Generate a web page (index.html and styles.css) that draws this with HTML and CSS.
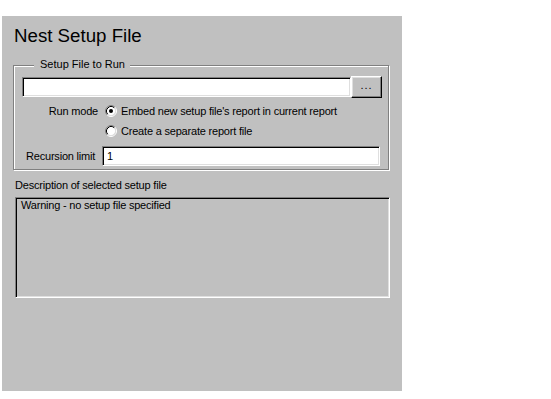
FILE: index.html
```html
<!DOCTYPE html>
<html>
<head>
<meta charset="utf-8">
<link rel="stylesheet" href="styles.css">
</head>
<body>
<div class="panel">
  <h1 class="title">Nest Setup File</h1>
  <div class="group">
    <span class="legend">Setup File to Run</span>
    <div class="row file-row">
      <div class="field file-field"></div>
      <div class="btn">...</div>
    </div>
    <div class="row radio-row">
      <span class="row-label">Run mode</span>
      <span class="radio">
        <svg width="12" height="12" viewBox="0 0 12 12"><circle cx="6" cy="6" r="4.5" fill="#fff"/><path d="M2.11 9.89A5.5 5.5 0 0 1 9.89 2.11" stroke="#808080" fill="none"/><path d="M9.89 2.11A5.5 5.5 0 0 1 2.11 9.89" stroke="#fff" fill="none"/><path d="M2.82 9.18A4.5 4.5 0 0 1 9.18 2.82" stroke="#000" fill="none"/><path d="M9.18 2.82A4.5 4.5 0 0 1 2.82 9.18" stroke="#dfdfdf" fill="none"/><circle cx="6" cy="6" r="2" fill="#000"/></svg>
      </span>
      <span class="radio-text">Embed new setup file's report in current report</span>
    </div>
    <div class="row radio-row">
      <span class="row-label"></span>
      <span class="radio">
        <svg width="12" height="12" viewBox="0 0 12 12"><circle cx="6" cy="6" r="4.5" fill="#fff"/><path d="M2.11 9.89A5.5 5.5 0 0 1 9.89 2.11" stroke="#808080" fill="none"/><path d="M9.89 2.11A5.5 5.5 0 0 1 2.11 9.89" stroke="#fff" fill="none"/><path d="M2.82 9.18A4.5 4.5 0 0 1 9.18 2.82" stroke="#000" fill="none"/><path d="M9.18 2.82A4.5 4.5 0 0 1 2.82 9.18" stroke="#dfdfdf" fill="none"/></svg>
      </span>
      <span class="radio-text">Create a separate report file</span>
    </div>
    <div class="row rec-row">
      <span class="rec-label">Recursion limit</span>
      <div class="field rec-field">1</div>
    </div>
  </div>
  <div class="desc-label">Description of selected setup file</div>
  <div class="desc-box">Warning - no setup file specified</div>
</div>
</body>
</html>
```

FILE: styles.css
```css
html, body {
  margin: 0;
  padding: 0;
  background: #fff;
}
body {
  font-family: "Liberation Sans", Arial, sans-serif;
  font-size: 11px;
  line-height: 13px;
  letter-spacing: -0.2px;
  color: #000;
}
.panel {
  margin: 16px 0 0 2px;
  width: 400px;
  height: 375px;
  box-sizing: border-box;
  background: #c0c0c0;
  padding: 9px 0 0 11px;
}
.title {
  margin: 0;
  padding-left: 1px;
  font-size: 18.7px;
  line-height: 21px;
  font-weight: normal;
  letter-spacing: 0;
  height: 21px;
}
.group {
  position: relative;
  margin-top: 19px;
  width: 376px;
  height: 105px;
  box-sizing: border-box;
  border: 1px solid #808080;
  box-shadow: inset 1px 1px #fff, 1px 1px #fff;
  padding: 10px 6px 0 8px;
}
.legend {
  position: absolute;
  top: -8px;
  left: 20px;
  padding: 0 5px 0 6px;
  background: #c0c0c0;
  letter-spacing: 0;
}
.row {
  display: flex;
  align-items: center;
}
.file-row {
  height: 22px;
}
.field {
  box-sizing: border-box;
  height: 20px;
  background: #fff;
  border: 1px solid;
  border-color: #808080 #fff #fff #808080;
  box-shadow: inset 1px 1px #000, inset -1px -1px #dfdfdf;
  padding: 3px 0 0 4px;
}
.file-field {
  width: 330px;
}
.btn {
  box-sizing: border-box;
  width: 31px;
  height: 22px;
  border: 1px solid;
  border-color: #fff #000 #000 #fff;
  box-shadow: inset -1px -1px #808080, inset 1px 1px #dfdfdf;
  text-align: center;
  line-height: 16px;
  letter-spacing: 1px;
}
.radio-row {
  height: 20px;
}
.file-row + .radio-row {
  margin-top: 3px;
}
.row-label {
  width: 76px;
  text-align: right;
  margin-right: 7px;
}
.radio {
  display: flex;
  width: 12px;
  height: 12px;
  margin-right: 4px;
}
.rec-row {
  margin-top: 5px;
  height: 20px;
}
.rec-label {
  width: 76px;
  padding-left: 4px;
}
.rec-field {
  width: 278px;
}
.desc-label {
  margin-top: 9px;
  padding-left: 2px;
}
.desc-box {
  margin: 5px 0 0 2px;
  width: 375px;
  height: 101px;
  box-sizing: border-box;
  border: 1px solid;
  border-color: #808080 #fff #fff #808080;
  box-shadow: inset 1px 1px #000, inset -1px -1px #dfdfdf;
  padding: 1px 0 0 5px;
}
```
